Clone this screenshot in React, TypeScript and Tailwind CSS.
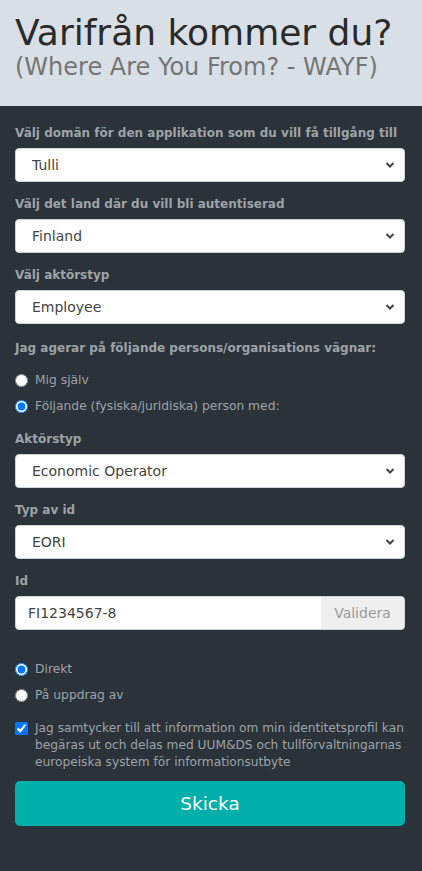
import { useState } from 'react';

const font = { fontFamily: '"DejaVu Sans", Verdana, sans-serif' };

function Chevron() {
    return (
        <svg className="pointer-events-none absolute right-[10px] top-1/2 -translate-y-1/2" width="10" height="7" viewBox="0 0 10 7">
            <path d="M1.5 1.5 L5 5 L8.5 1.5" fill="none" stroke="#444" strokeWidth="2" />
        </svg>
    );
}

function Field({ label, value, options }: { label: string; value: string; options: string[] }) {
    return (
        <div className="flex flex-col">
            <label className="mb-[7px] text-[12px] font-bold leading-[15px] text-[#9ea3a8]">{label}</label>
            <div className="relative">
                <select
                    defaultValue={value}
                    className="h-[34px] w-full appearance-none rounded-[4px] border border-[#ced4da] bg-white pl-[16px] text-[14px] text-[#444] outline-none"
                >
                    {options.map((o) => (
                        <option key={o}>{o}</option>
                    ))}
                </select>
                <Chevron />
            </div>
        </div>
    );
}

function Radio({ label, checked, name, onChange }: { label: string; checked: boolean; name: string; onChange: () => void }) {
    return (
        <label className="flex h-[26px] items-center gap-[7px] text-[12.3px] text-[#9ea3a8]">
            <input type="radio" name={name} checked={checked} onChange={onChange} className="m-0 h-[13px] w-[13px] accent-[#0075ff]" />
            {label}
        </label>
    );
}

export default function App() {
    const [behalf, setBehalf] = useState('other');
    const [mode, setMode] = useState('direct');

    return (
        <div className="flex min-h-screen flex-col bg-[#2b3239]" style={font}>
            <div className="h-[106px] bg-[#d9dfe7] px-[15px] pt-[12px]">
                <h1 className="text-[36px] leading-[42px] text-[#2a2a2a]">Varifrån kommer du?</h1>
                <p className="text-[24px] leading-[26px] text-[#757575]">(Where Are You From? - WAYF)</p>
            </div>
            <div className="flex flex-col pl-[15px] pr-[17px] pt-[20px]">
                <div className="flex flex-col gap-[15px]">
                    <Field label="Välj domän för den applikation som du vill få tillgång till" value="Tulli" options={['Tulli']} />
                    <Field label="Välj det land där du vill bli autentiserad" value="Finland" options={['Finland']} />
                    <Field label="Välj aktörstyp" value="Employee" options={['Employee']} />
                </div>
                <div className="mt-[17px] text-[12px] font-bold leading-[15px] text-[#9ea3a8]">Jag agerar på följande persons/organisations vägnar:</div>
                <div className="mt-[11px] flex flex-col">
                    <Radio label="Mig själv" name="behalf" checked={behalf === 'self'} onChange={() => setBehalf('self')} />
                    <Radio label="Följande (fysiska/juridiska) person med:" name="behalf" checked={behalf === 'other'} onChange={() => setBehalf('other')} />
                </div>
                <div className="mt-[13px] flex flex-col gap-[15px]">
                    <Field label="Aktörstyp" value="Economic Operator" options={['Economic Operator']} />
                    <Field label="Typ av id" value="EORI" options={['EORI']} />
                    <div className="flex flex-col">
                        <label className="mb-[7px] text-[12px] font-bold leading-[15px] text-[#9ea3a8]">Id</label>
                        <div className="flex h-[34px] overflow-hidden rounded-[4px] border border-[#ced4da] bg-white">
                            <input
                                defaultValue="FI1234567-8"
                                className="min-w-0 flex-1 bg-white pl-[12px] text-[14px] text-[#444] outline-none"
                            />
                            <button className="w-[83px] bg-[#efefef] text-[14px] text-[#9a9a9a]">Validera</button>
                        </div>
                    </div>
                </div>
                <div className="mt-[26px] flex flex-col">
                    <Radio label="Direkt" name="mode" checked={mode === 'direct'} onChange={() => setMode('direct')} />
                    <Radio label="På uppdrag av" name="mode" checked={mode === 'assign'} onChange={() => setMode('assign')} />
                </div>
                <label className="mt-[12px] flex items-start gap-[7px] text-[12.2px] leading-[17px] text-[#9ea3a8]">
                    <input type="checkbox" defaultChecked className="m-0 mt-[2px] h-[13px] w-[13px] shrink-0 accent-[#0075ff]" />
                    <span>Jag samtycker till att information om min identitetsprofil kan begäras ut och delas med UUM&amp;DS och tullförvaltningarnas europeiska system för informationsutbyte</span>
                </label>
                <button className="mt-[10px] h-[45px] rounded-[5px] bg-[#00aeaa] text-[18.5px] text-white">Skicka</button>
            </div>
        </div>
    );
}
